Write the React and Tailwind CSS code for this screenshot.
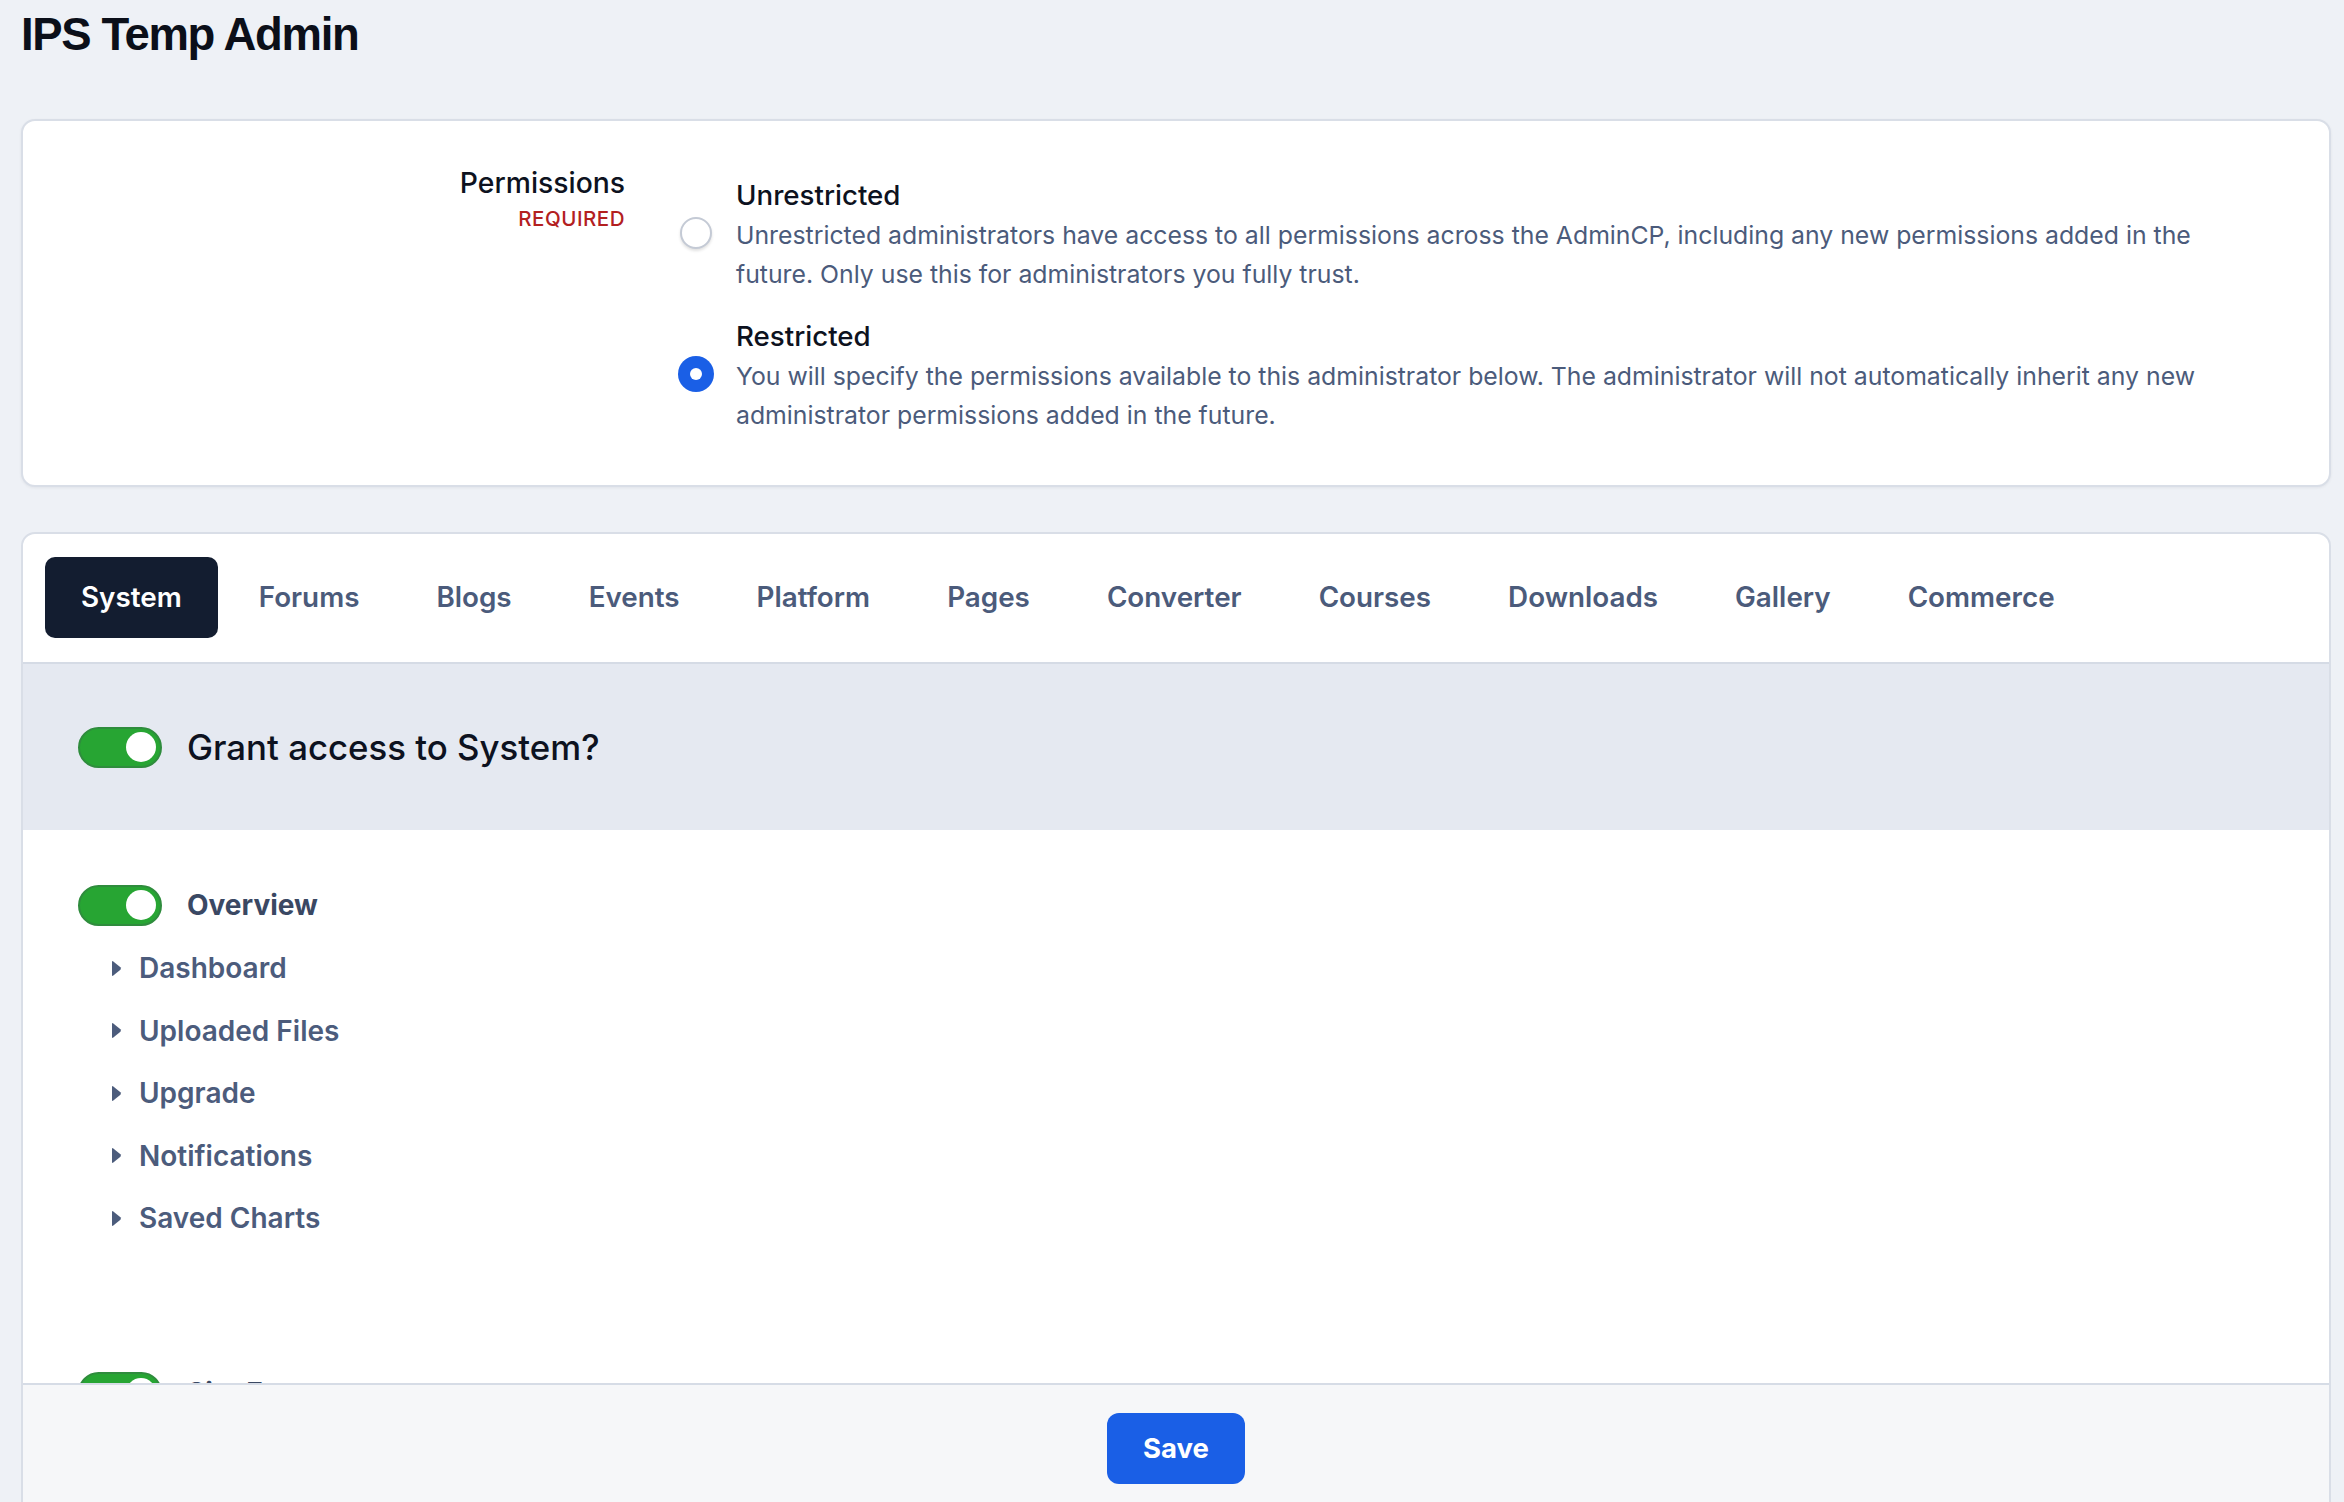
import React from "react";

const tabs = ["System", "Forums", "Blogs", "Events", "Platform", "Pages", "Converter", "Courses", "Downloads", "Gallery", "Commerce"];

const overviewItems = ["Dashboard", "Uploaded Files", "Upgrade", "Notifications", "Saved Charts"];

const Toggle = () => (
  <span className="relative inline-flex h-[41px] w-[84px] shrink-0 items-center rounded-full border-2 border-[#2f8c3d] bg-[#27a533]">
    <span className="absolute right-[4px] h-[30px] w-[30px] rounded-full bg-white" />
  </span>
);

const Caret = () => (
  <svg width="11" height="19" viewBox="0 0 11 19" className="shrink-0">
    <path d="M2.3 2.4 L9.4 8.3 Q10.4 9.5 9.4 10.7 L2.3 16.6 Q1 17.5 1 16 L1 3 Q1 1.5 2.3 2.4 Z" fill="#4c5c7c" />
  </svg>
);

const Option = ({ checked, title, children }) => (
  <div className="flex">
    <div className="flex w-[36px] shrink-0 justify-center pt-[41px]">
      {checked ? (
        <span className="flex h-[36px] w-[36px] items-center justify-center rounded-full bg-[#1a5fe6]">
          <span className="h-[12px] w-[12px] rounded-full bg-white" />
        </span>
      ) : (
        <span className="mt-[2px] h-[32px] w-[32px] rounded-full border-2 border-[#c4cad5] bg-white shadow-[0_2px_3px_rgba(0,0,0,0.12)]" />
      )}
    </div>
    <div className="ml-[22px] w-[1490px]">
      <div className="text-[27.7px] font-medium leading-[42px] text-[#0d1220]">{title}</div>
      <p className="text-[24.8px] leading-[38.5px] text-[#4b5b7b]">{children}</p>
    </div>
  </div>
);

export default function App() {
  return (
    <div className="h-[1502px] overflow-hidden bg-[#eef1f6] pl-[21px] pr-[13px] font-['Inter',sans-serif]">
      <h1 className="pt-[8px] font-['Liberation_Sans',sans-serif] text-[45.5px] font-bold leading-[54px] tracking-[-0.03em] text-[#0b0f19]">
        IPS Temp Admin
      </h1>

      <div className="mt-[57px] flex rounded-[14px] border-2 border-[#d9dee7] bg-white pb-[51px] pt-[42px] shadow-[0_1px_3px_rgba(15,23,42,0.06)]">
        <div className="w-[602px] shrink-0 pt-[2px] text-right">
          <div className="text-[28.3px] font-medium leading-[36px] text-[#0d1220]">Permissions</div>
          <div className="mt-[5px] text-[20.5px] font-medium uppercase leading-[26px] tracking-wide text-[#b3201f]">Required</div>
        </div>
        <div className="ml-[53px] flex flex-col gap-[22px] pt-[11px]">
          <Option title="Unrestricted">
            Unrestricted administrators have access to all permissions across the AdminCP, including any new permissions added in the future. Only use this for administrators you fully trust.
          </Option>
          <Option checked title="Restricted">
            You will specify the permissions available to this administrator below. The administrator will not automatically inherit any new administrator permissions added in the future.
          </Option>
        </div>
      </div>

      <div className="mt-[45px] flex h-[984px] flex-col overflow-hidden rounded-[14px] border-2 border-[#d9dee7] bg-white">
        <div className="flex items-center gap-[5px] border-b-2 border-[#d5dbe5] px-[22px] pb-[24px] pt-[23px]">
          {tabs.map((t, i) => (
            <div
              key={t}
              className={
                i === 0
                  ? "flex h-[81px] items-center rounded-[10px] bg-[#131d30] px-[36px] text-[27.8px] font-semibold text-white"
                  : "flex h-[81px] items-center px-[36px] text-[27.8px] font-semibold text-[#4b5b7b]"
              }
            >
              {t}
            </div>
          ))}
        </div>

        <div className="flex h-[166px] shrink-0 items-center gap-[25px] bg-[#e5e9f1] px-[55px]">
          <Toggle />
          <span className="text-[34.8px] font-medium text-[#0d1220]">Grant access to System?</span>
        </div>

        <div className="flex-1 overflow-hidden px-[55px] pt-[54px]">
          <div className="flex items-center gap-[25px]">
            <Toggle />
            <span className="text-[28px] font-bold text-[#3a4863]">Overview</span>
          </div>
          <ul className="mt-[11px] flex flex-col pl-[33px]">
            {overviewItems.map((item) => (
              <li key={item} className="flex h-[62.5px] items-center gap-[17px] text-[28px] font-semibold text-[#4c5c7c]">
                <Caret />
                {item}
              </li>
            ))}
          </ul>
          <div className="mt-[122px] flex items-center gap-[25px]">
            <Toggle />
            <span className="text-[28px] font-bold text-[#3a4863]">Site Features</span>
          </div>
        </div>

        <div className="flex h-[131px] shrink-0 items-start justify-center border-t-2 border-[#d6dce6] bg-[#f6f7f9] pt-[28px]">
          <button className="h-[71px] rounded-[12px] bg-[#1a5fe6] px-[36px] text-[27.5px] font-bold text-white">Save</button>
        </div>
      </div>
    </div>
  );
}
